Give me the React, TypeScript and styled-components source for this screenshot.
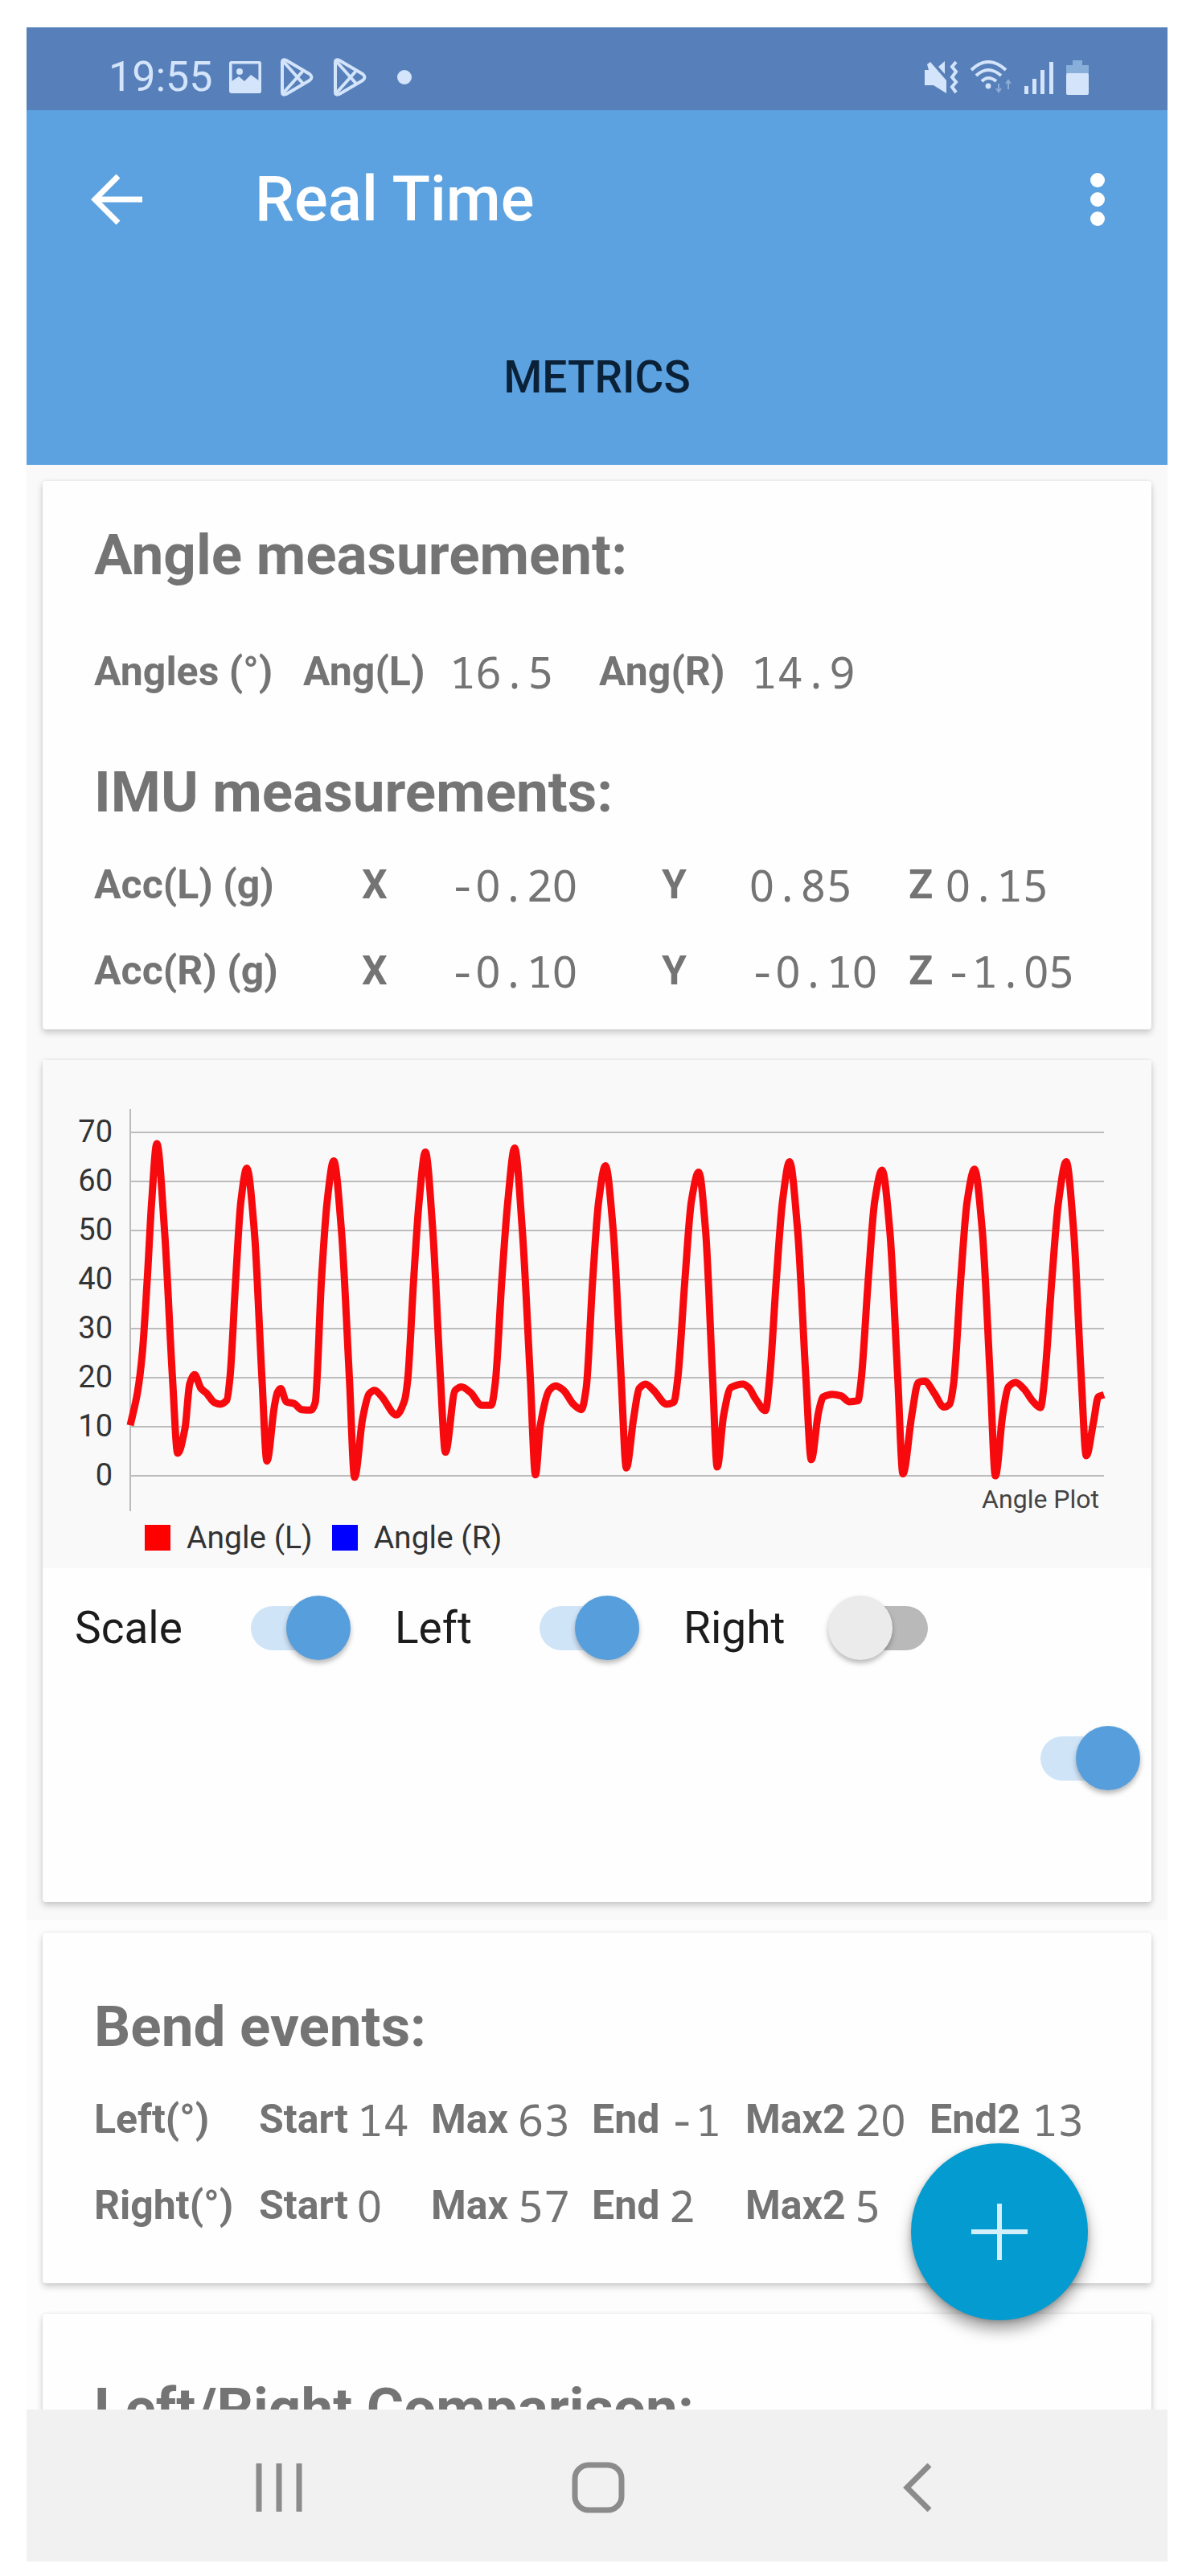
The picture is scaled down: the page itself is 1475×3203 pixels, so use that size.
import React, { useState } from "react";
import styled, { createGlobalStyle } from "styled-components";

const GlobalStyle = createGlobalStyle`
  * { box-sizing: border-box; }
  body { margin: 0; background: #ffffff; }
`;

const Screen = styled.div`
  display: flex;
  flex-direction: column;
  height: 100vh;
  padding: 34px 23px 18px 33px;
  font-family: Roboto, "Liberation Sans", sans-serif;
  color: #747474;
`;

const StatusBar = styled.div`
  display: flex;
  align-items: center;
  flex: none;
  height: 103px;
  padding: 20px 98px 0 102px;
  background: #5780bb;
  color: #d3e4fb;
`;

const Clock = styled.time`
  font-size: 52px;
  line-height: 60px;
  margin-right: 20px;
`;

const StatusGroup = styled.div<{ $end?: boolean }>`
  display: flex;
  align-items: center;
  gap: ${(p) => (p.$end ? "14px" : "23px")};
  margin-left: ${(p) => (p.$end ? "auto" : "0")};
`;

const Dot = styled.span`
  width: 18px;
  height: 18px;
  margin-left: 14px;
  border-radius: 50%;
  background: currentColor;
`;

const Header = styled.header`
  flex: none;
  background: #5ca2e0;
`;

const Toolbar = styled.div`
  display: flex;
  align-items: center;
  height: 222px;
  padding: 0 57px 0 68px;
`;

const IconButton = styled.button`
  display: flex;
  align-items: center;
  justify-content: center;
  padding: 0;
  border: 0;
  background: none;
  color: inherit;
`;

const BarButton = styled(IconButton)`
  width: 88px;
  height: 88px;
  color: #ffffff;
  &:last-child { width: 60px; margin-left: auto; }
`;

const Title = styled.h1`
  margin: 0 0 0 128px;
  font-size: 78px;
  line-height: 92px;
  font-weight: 500;
  color: #ffffff;
`;

const Tabs = styled.nav`
  display: flex;
  justify-content: center;
  height: 219px;
`;

const Tab = styled.a`
  display: flex;
  align-items: center;
  padding: 0 48px;
  font-size: 55px;
  line-height: 64px;
  font-weight: 500;
  color: #0b2138;
  text-decoration: none;
`;

const Content = styled.main`
  position: relative;
  flex: 1;
  min-height: 0;
  overflow: hidden;
  background: linear-gradient(#f9f9f9 1809px, #fdfdfd 1809px);
`;

const CardList = styled.div`
  display: flex;
  flex-direction: column;
  gap: 38px;
  padding: 20px 20px 0;
`;

const Card = styled.section`
  border-radius: 4px;
  background: #fefefe;
  box-shadow: 0 4px 8px rgba(0, 0, 0, 0.2), 0 0 4px rgba(0, 0, 0, 0.06);
`;

const DataCard = styled(Card)<{ $top: number; $bottom: number }>`
  padding: ${(p) => p.$top}px 64px ${(p) => p.$bottom}px;
`;

const CardTitle = styled.h2<{ $before?: number; $after?: number }>`
  margin: ${(p) => p.$before ?? 0}px 0 ${(p) => p.$after ?? 19}px;
  font-size: 71px;
  line-height: 84px;
  font-weight: 700;
`;

const DataTable = styled.table`
  width: 100%;
  table-layout: fixed;
  border-collapse: collapse;
  font-size: 50px;
  line-height: 64px;
`;

const Col = styled.col<{ $w?: number }>`
  width: ${(p) => (p.$w ? `${p.$w}px` : "auto")};
`;

const Key = styled.th`
  height: 107px;
  padding: 0;
  font-weight: 700;
  text-align: left;
  white-space: nowrap;
`;

const ValueCell = styled.td`
  height: 107px;
  padding: 0;
  font-family: "Noto Sans Mono", "Droid Sans Mono", "DejaVu Sans Mono", monospace;
  font-size: 54px;
  white-space: nowrap;
`;

const PlainZero = styled.span`
  font-family: "Noto Sans", "Open Sans", sans-serif;
`;

const ChartFigure = styled.figure`
  margin: 0;
  padding-bottom: 14px;
  background: #f9f9f9;
  color: #333333;
`;

const Plot = styled.svg`
  display: block;
  width: 100%;
  height: auto;
  font-family: Roboto, "Liberation Sans", sans-serif;
`;

const Legend = styled.figcaption`
  display: flex;
  align-items: center;
  gap: 24px;
  height: 48px;
  padding-left: 127px;
`;

const LegendItem = styled.span`
  display: flex;
  align-items: center;
  gap: 20px;
  font-size: 39px;
  line-height: 44px;
`;

const Swatch = styled.span<{ $color: string }>`
  width: 32px;
  height: 32px;
  background: ${(p) => p.$color};
`;

const SwitchRow = styled.div`
  display: flex;
  align-items: center;
  gap: 55px;
  height: 148px;
  padding-left: 40px;
`;

const SoloSwitchRow = styled.div`
  display: flex;
  justify-content: flex-end;
  padding: 48px 14px 139px;
`;

const SwitchLabel = styled.label<{ $width: number }>`
  display: flex;
  align-items: center;
  justify-content: space-between;
  width: ${(p) => p.$width}px;
  font-size: 55px;
  line-height: 64px;
  color: #1c1c1c;
`;

const SwitchInput = styled.input`
  appearance: none;
  display: grid;
  align-items: center;
  flex: none;
  width: 124px;
  height: 80px;
  margin: 0;
  &::before {
    content: "";
    grid-area: 1 / 1;
    justify-self: end;
    width: 108px;
    height: 55px;
    border-radius: 28px;
    background: #b9b9b9;
  }
  &::after {
    content: "";
    grid-area: 1 / 1;
    justify-self: start;
    width: 80px;
    height: 80px;
    border-radius: 50%;
    background: #ebebeb;
    box-shadow: 0 4px 6px rgba(0, 0, 0, 0.28);
  }
  &:checked::before {
    justify-self: start;
    background: #d0e4f8;
  }
  &:checked::after {
    justify-self: end;
    background: #579fdc;
  }
`;

const Fab = styled(IconButton)`
  position: absolute;
  right: 99px;
  bottom: 111px;
  width: 220px;
  height: 220px;
  border-radius: 50%;
  background: #039bd0;
  color: #d5effa;
  box-shadow: 0 12px 18px rgba(0, 0, 0, 0.35), 0 2px 6px rgba(0, 0, 0, 0.2);
`;

const SystemNav = styled.nav`
  display: grid;
  grid-template-columns: repeat(3, 397px);
  justify-content: center;
  flex: none;
  height: 189px;
  padding: 5px 0 0 3px;
  background: #f1f1f1;
  color: #8b8b8b;
`;

const cycles: { base: number[][]; peak: number[]; trough: number[] }[] = [
  { base: [[162, 10.3], [171, 17], [177, 25]], peak: [195, 67.7], trough: [221, 4.6] },
  { base: [[230, 9.6], [236, 18.8], [242, 20.6], [250, 17.8], [257, 16.8], [267, 14.9], [274, 14.6], [282, 15.4], [286, 20]], peak: [307, 62.7], trough: [332, 3] },
  { base: [[341, 13.9], [345, 17], [349, 17.8], [356, 15.1], [366, 14.7], [375, 13.5], [387, 13.4], [392, 14.9]], peak: [415, 64.2], trough: [441, -0.3] },
  { base: [[451, 11.7], [459, 16.7], [466, 17.4], [474, 16.3], [493, 12.4], [503, 15.3], [507, 19.5]], peak: [529, 66], trough: [554, 4.8] },
  { base: [[566, 17.4], [574, 18.1], [585, 17], [599, 14.4], [611, 14.4], [616, 19]], peak: [640, 66.8], trough: [666, 0.2] },
  { base: [[672, 10.3], [683, 17.4], [691, 18.3], [701, 17.4], [713, 14.6], [723, 13.5], [729, 17.8]], peak: [753, 63.2], trough: [779, 1.6] },
  { base: [[788, 11.7], [795, 17.8], [803, 18.7], [813, 17.4], [829, 14.6], [838, 15], [843, 20]], peak: [869, 61.9], trough: [892, 1.8] },
  { base: [[900, 12.4], [909, 18], [924, 18.7], [931, 18], [940, 15.6], [952, 13.3], [957, 19.5]], peak: [982, 64], trough: [1009, 3.3] },
  { base: [[1018, 13], [1024, 16.1], [1035, 16.6], [1046, 16.3], [1056, 15.1], [1067, 15.3], [1071, 19.5]], peak: [1097, 62.3], trough: [1123, 0.4] },
  { base: [[1134, 12.4], [1142, 19], [1150, 19.3], [1162, 16.8], [1174, 14], [1181, 14.6], [1186, 18.8]], peak: [1212, 62.5], trough: [1238, 0] },
  { base: [[1247, 12.4], [1254, 18.1], [1263, 19], [1273, 17.8], [1285, 15.1], [1294, 13.9], [1299, 19.5]], peak: [1326, 64], trough: [1351, 4.1] },
];

const samples: number[][] = cycles
  .flatMap(({ base, peak, trough }) => {
    const [bx] = base[base.length - 1];
    const rise = peak[0] - bx;
    const fall = trough[0] - peak[0];
    return [
      ...base,
      [bx + rise * 0.34, 40],
      [bx + rise * 0.65, 56],
      peak,
      [peak[0] + fall * 0.37, 50],
      [peak[0] + fall * 0.75, 20],
      trough,
    ];
  })
  .concat([[1360, 11], [1366, 16.1], [1373, 16.5]]);

const toY = (deg: number) => 517 - deg * 6.1;

/* Monotone cubic curve through the samples, so peaks never overshoot. */
function curve(points: number[][]): string {
  const p = points.map(([x, v]) => [x - 53, toY(v)]);
  const slope = p.slice(1).map((q, i) => (q[1] - p[i][1]) / (q[0] - p[i][0]));
  const tangent = p.map((_, i) => {
    const a = slope[i - 1] ?? slope[0];
    const b = slope[i] ?? slope[slope.length - 1];
    return a * b <= 0 ? 0 : (2 * a * b) / (a + b);
  });
  return p.reduce((d, q, i) => {
    if (i === 0) return `M${q[0]} ${q[1]}`;
    const o = p[i - 1];
    const h = (q[0] - o[0]) / 3;
    return `${d}C${o[0] + h} ${o[1] + h * tangent[i - 1]} ${q[0] - h} ${q[1] - h * tangent[i]} ${q[0]} ${q[1]}`;
  }, "");
}

const PlayIcon = () => (
  <svg width="43" height="48" viewBox="0 0 43 48" fill="none" stroke="currentColor" strokeWidth="4" strokeLinejoin="round" aria-hidden="true">
    <path d="M3 5Q3 1 8 3L37 20Q42 24 37 28L8 45Q3 47 3 43Z" />
    <path d="M4 4L29 32M4 44L29 16" />
  </svg>
);

/* Monospaced reading whose zeros carry no slash. */
function Value({ children }: { children: string }) {
  return (
    <ValueCell>
      {children.split(/(0)/).map((part, i) => (part === "0" ? <PlainZero key={i}>0</PlainZero> : part))}
    </ValueCell>
  );
}

function Switch({ label, width, initial }: { label: string; width: number; initial: boolean }) {
  const [on, setOn] = useState(initial);
  return (
    <SwitchLabel $width={width}>
      {label}
      <SwitchInput type="checkbox" checked={on} onChange={() => setOn(!on)} />
    </SwitchLabel>
  );
}

const accRows = [
  { name: "Acc(L) (g)", x: "-0.20", y: "0.85", z: "0.15" },
  { name: "Acc(R) (g)", x: "-0.10", y: "-0.10", z: "-1.05" },
];

const bendRows = [
  { name: "Left(°)", values: [["Start", "14"], ["Max", "63"], ["End", "-1"], ["Max2", "20"], ["End2", "13"]] },
  { name: "Right(°)", values: [["Start", "0"], ["Max", "57"], ["End", "2"], ["Max2", "5"]] },
];

export default function App() {
  const [solo, setSolo] = useState(true);
  return (
    <Screen>
      <GlobalStyle />
      <StatusBar>
        <Clock>19:55</Clock>
        <StatusGroup>
          <svg width="40" height="40" viewBox="0 0 40 40" aria-hidden="true">
            <rect x="1.8" y="1.8" width="36.4" height="36.4" rx="1" fill="none" stroke="currentColor" strokeWidth="3.6" />
            <circle cx="13" cy="13" r="4" fill="currentColor" />
            <path d="M3 25L12 19L19 25L27 17L38 25V38H3Z" fill="currentColor" />
          </svg>
          <PlayIcon />
          <PlayIcon />
          <Dot />
        </StatusGroup>
        <StatusGroup $end>
          <svg width="43" height="42" viewBox="0 0 43 42" aria-hidden="true">
            <path d="M1 12H6L4 5L8 2L28 25V41L12 31H1Z" fill="currentColor" />
            <path d="M18 8L26 1V17Z" fill="currentColor" />
            <path d="M40 2L35 8L40 14L35 21L40 27L35 33L40 40" fill="none" stroke="currentColor" strokeWidth="4" />
          </svg>
          <svg width="54" height="42" viewBox="0 0 54 42" fill="none" stroke="currentColor" strokeWidth="4" aria-hidden="true">
            <path d="M2 12Q23 -8 45 12M8 19Q23 5 39 19M15 26Q23 18 33 26" />
            <circle cx="23" cy="32" r="3.4" fill="currentColor" stroke="none" />
            <path d="M36 29V38M33 35L36 39L39 35M48 36V26M45 29L48 25L51 29" strokeWidth="2" opacity="0.45" />
          </svg>
          <svg width="38" height="42" viewBox="0 0 38 42" fill="currentColor" aria-hidden="true">
            <path d="M0 32H5V42H0ZM10 23H15V42H10ZM20 12H25V42H20ZM31 2H36V42H31Z" />
          </svg>
          <svg width="28" height="44" viewBox="0 0 28 44" aria-hidden="true">
            <path d="M0 7H8V1H20V7H28V18H0Z" fill="#87afd9" />
            <rect y="17" width="28" height="27" rx="2" fill="currentColor" />
          </svg>
        </StatusGroup>
      </StatusBar>

      <Header>
        <Toolbar>
          <BarButton type="button" aria-label="Back">
            <svg width="66" height="64" viewBox="0 0 66 64" fill="none" stroke="currentColor" strokeWidth="7" aria-hidden="true">
              <path d="M35 3L6 32L35 61M6 32H65" />
            </svg>
          </BarButton>
          <Title>Real Time</Title>
          <BarButton type="button" aria-label="More options">
            <svg width="18" height="66" viewBox="0 0 18 66" fill="currentColor" aria-hidden="true">
              <circle cx="9" cy="9" r="9" />
              <circle cx="9" cy="33" r="9" />
              <circle cx="9" cy="57" r="9" />
            </svg>
          </BarButton>
        </Toolbar>
        <Tabs>
          <Tab href="#metrics">METRICS</Tab>
        </Tabs>
      </Header>

      <Content id="metrics">
        <CardList>
          <DataCard $top={50} $bottom={20}>
            <CardTitle $after={49}>Angle measurement:</CardTitle>
            <DataTable>
              <colgroup>
                <Col $w={260} /><Col $w={182} /><Col $w={186} /><Col $w={189} /><Col />
              </colgroup>
              <tbody>
                <tr>
                  <Key scope="row">Angles (°)</Key>
                  <Key scope="row">Ang(L)</Key>
                  <Value>16.5</Value>
                  <Key scope="row">Ang(R)</Key>
                  <Value>14.9</Value>
                </tr>
              </tbody>
            </DataTable>
            <CardTitle $before={55}>IMU measurements:</CardTitle>
            <DataTable>
              <colgroup>
                <Col $w={333} /><Col $w={109} /><Col $w={264} /><Col $w={109} /><Col $w={198} /><Col $w={46} /><Col />
              </colgroup>
              <tbody>
                {accRows.map((r) => (
                  <tr key={r.name}>
                    <Key scope="row">{r.name}</Key>
                    <Key scope="row">X</Key>
                    <Value>{r.x}</Value>
                    <Key scope="row">Y</Key>
                    <Value>{r.y}</Value>
                    <Key scope="row">Z</Key>
                    <Value>{r.z}</Value>
                  </tr>
                ))}
              </tbody>
            </DataTable>
          </DataCard>

          <Card>
            <ChartFigure>
              <Plot viewBox="0 0 1379 570" role="img" aria-label="Angle plot">
                <g stroke="#bcbcbc" strokeWidth="2">
                  {[0, 10, 20, 30, 40, 50, 60, 70].map((v) => (
                    <line key={v} x1="109" x2="1320" y1={toY(v)} y2={toY(v)} />
                  ))}
                  <line x1="109" x2="109" y1="61" y2="561" />
                </g>
                <g fill="#333333" fontSize="38" textAnchor="end">
                  {[0, 10, 20, 30, 40, 50, 60, 70].map((v) => (
                    <text key={v} x="87" y={toY(v) + 12}>{v}</text>
                  ))}
                </g>
                <path d={curve(samples)} fill="none" stroke="#f60a0e" strokeWidth="9" strokeLinejoin="round" />
                <text x="1314" y="557" fill="#444444" fontSize="32" textAnchor="end">Angle Plot</text>
              </Plot>
              <Legend>
                <LegendItem><Swatch $color="#fe0000" />Angle (L)</LegendItem>
                <LegendItem><Swatch $color="#0000fe" />Angle (R)</LegendItem>
              </Legend>
            </ChartFigure>
            <SwitchRow>
              <Switch label="Scale" width={343} initial />
              <Switch label="Left" width={304} initial />
              <Switch label="Right" width={304} initial={false} />
            </SwitchRow>
            <SoloSwitchRow>
              <SwitchInput type="checkbox" aria-label="Plot" checked={solo} onChange={() => setSolo(!solo)} />
            </SoloSwitchRow>
          </Card>

          <DataCard $top={75} $bottom={44}>
            <CardTitle>Bend events:</CardTitle>
            <DataTable>
              <colgroup>
                <Col $w={205} /><Col $w={122} /><Col $w={92} /><Col $w={108} /><Col $w={92} />
                <Col $w={96} /><Col $w={95} /><Col $w={136} /><Col $w={93} /><Col $w={127} /><Col />
              </colgroup>
              <tbody>
                {bendRows.map((r) => (
                  <tr key={r.name}>
                    <Key scope="row">{r.name}</Key>
                    {r.values.map(([key, value]) => (
                      <React.Fragment key={key}>
                        <Key scope="row">{key}</Key>
                        <Value>{value}</Value>
                      </React.Fragment>
                    ))}
                  </tr>
                ))}
              </tbody>
            </DataTable>
          </DataCard>

          <DataCard $top={76} $bottom={44}>
            <CardTitle>Left/Right Comparison:</CardTitle>
          </DataCard>
        </CardList>
        <Fab type="button" aria-label="Add">
          <svg width="70" height="70" viewBox="0 0 70 70" fill="none" stroke="currentColor" strokeWidth="6" aria-hidden="true">
            <path d="M35 0V70M0 35H70" />
          </svg>
        </Fab>
      </Content>

      <SystemNav>
        <IconButton type="button" aria-label="Recent apps">
          <svg width="58" height="60" viewBox="0 0 58 60" fill="none" stroke="currentColor" strokeWidth="7" aria-hidden="true">
            <path d="M4 0V60M29 0V60M54 0V60" />
          </svg>
        </IconButton>
        <IconButton type="button" aria-label="Home">
          <svg width="66" height="64" viewBox="0 0 66 64" fill="none" stroke="currentColor" strokeWidth="7" aria-hidden="true">
            <rect x="4" y="4" width="58" height="56" rx="17" />
          </svg>
        </IconButton>
        <IconButton type="button" aria-label="Back">
          <svg width="36" height="60" viewBox="0 0 36 60" fill="none" stroke="currentColor" strokeWidth="7" aria-hidden="true">
            <path d="M33 2L5 30L33 58" />
          </svg>
        </IconButton>
      </SystemNav>
    </Screen>
  );
}
